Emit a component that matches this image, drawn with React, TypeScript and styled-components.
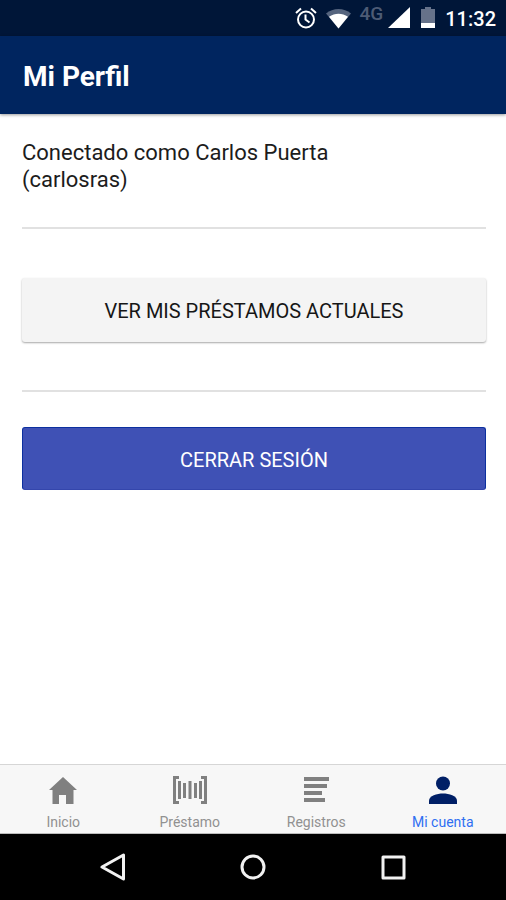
import React from "react";
import styled, { createGlobalStyle } from "styled-components";

const GlobalStyle = createGlobalStyle`
  *, *::before, *::after { box-sizing: border-box; }
  body {
    margin: 0;
    background: #fff;
    font-family: Roboto, "Liberation Sans", sans-serif;
  }
  button { font-family: inherit; cursor: pointer; }
`;

const Screen = styled.div`
  display: flex;
  flex-direction: column;
  min-height: 100vh;
`;

const StatusBar = styled.div`
  display: flex;
  align-items: center;
  justify-content: flex-end;
  height: 36px;
  padding: 0 10px;
  background: #001638;
  color: #fff;
`;

const StatusIcon = styled.svg<{ $gap: number }>`
  display: block;
  flex: none;
  margin-right: ${({ $gap }) => $gap}px;
`;

const Network = styled.span`
  align-self: flex-start;
  margin: 3px 5px 0 0;
  font-size: 19px;
  font-weight: 500;
  line-height: 22px;
  color: #4d5b75;
`;

const Clock = styled.time`
  font-size: 20px;
  font-weight: 500;
  line-height: 36px;
  padding-top: 2px;
`;

const Header = styled.header`
  display: flex;
  align-items: center;
  height: 78px;
  padding: 4px 23px 0;
  background: #00255f;
  box-shadow: 0 1px 3px rgba(0, 0, 0, 0.4);
`;

const Title = styled.h1`
  margin: 0;
  font-size: 28px;
  font-weight: 700;
  line-height: 32px;
  color: #fff;
`;

const Content = styled.main`
  flex: 1;
  padding: 25px 20px 24px 22px;
`;

const Message = styled.p`
  margin: 0;
  font-size: 22px;
  line-height: 27px;
  color: #1c1c1c;
`;

const Divider = styled.hr<{ $top: number; $bottom: number }>`
  height: 2px;
  margin: ${({ $top, $bottom }) => `${$top}px 0 ${$bottom}px`};
  border: 0;
  background: #e1e1e1;
`;

const ActionButton = styled.button<{ $primary?: boolean }>`
  display: block;
  width: 100%;
  height: ${({ $primary }) => ($primary ? 63 : 64)}px;
  padding: 2px 0 0;
  border: ${({ $primary }) => ($primary ? "1px solid #0c309f" : "0")};
  border-bottom-color: #3446ac;
  border-radius: 3px;
  background: ${({ $primary }) => ($primary ? "#3f51b5" : "#f4f4f4")};
  box-shadow: ${({ $primary }) =>
    $primary ? "none" : "0 1px 2px rgba(0, 0, 0, 0.35)"};
  color: ${({ $primary }) => ($primary ? "#fff" : "#161616")};
  font-size: 20px;
  line-height: 24px;
  text-transform: uppercase;
`;

const TabBar = styled.nav`
  display: grid;
  grid-template-columns: repeat(4, 1fr);
  height: 70px;
  border-top: 1px solid #d6d6d6;
  border-bottom: 1px solid #bcbcbc;
  background: #f7f7f7;
`;

const Tab = styled.a<{ $active?: boolean }>`
  display: flex;
  flex-direction: column;
  align-items: center;
  gap: 10px;
  padding-top: 11px;
  color: ${({ $active }) => ($active ? "#2f6ff2" : "#919191")};
  font-size: 14px;
  line-height: 16px;
  text-decoration: none;
`;

const TabIcon = styled.svg<{ $active?: boolean }>`
  display: block;
  fill: ${({ $active }) => ($active ? "#001f66" : "#808080")};
`;

const SystemBar = styled.div`
  display: flex;
  align-items: center;
  justify-content: center;
  gap: 112px;
  height: 66px;
  background: #000;
`;

const SystemButton = styled.button`
  display: block;
  padding: 0;
  border: 0;
  background: none;
  svg {
    display: block;
    fill: none;
    stroke: #f2f2f2;
    stroke-width: 3;
    stroke-linejoin: round;
  }
`;

const tabs = [
  {
    label: "Inicio",
    width: 28,
    icon: <path d="M14 1 0 14h3.500v14H10v-9h7v9h7.500V14H28z" />,
  },
  {
    label: "Préstamo",
    width: 36,
    icon: (
      <path d="M1 0h6v3H4v22h3v3H1zM29 0h6v28h-6v-3h3V3h-3zM6 5h3v18H6zM11 7h3v15h-3zM16.500 5h3v18h-3zM22 7h3v15h-3zM27 5h3v18h-3z" />
    ),
  },
  {
    label: "Registros",
    width: 28,
    icon: <path d="M2 1h25v4H2zM2 8h23v4H2zM2 15h18v4H2zM2 22h21v4H2z" />,
  },
  {
    label: "Mi cuenta",
    width: 28,
    active: true,
    icon: (
      <>
        <circle cx="14" cy="7.500" r="7" />
        <path d="M0 28v-3.500C0 20 8 17.500 14 17.500S28 20 28 24.500V28z" />
      </>
    ),
  },
];

export default function App() {
  return (
    <>
      <GlobalStyle />
      <Screen>
        <StatusBar>
          <StatusIcon $gap={9} width="22" height="22" viewBox="0 0 22 22" fill="none" stroke="#fff" strokeWidth="2">
            <circle cx="11" cy="12.500" r="8" />
            <path d="M1 6 6 1.500M21 6l-5-4.500M10.500 7.500v5l4 3" />
          </StatusIcon>
          <StatusIcon $gap={9} width="25" height="22" viewBox="0 0 25 22">
            <path d="M0 6.500C7 .5 18 .5 25 6.500L12.500 21.500z" fill="#55647e" />
            <path d="M3 9.800c6-4 13-4 19 0L12.500 21.500z" fill="#fff" />
          </StatusIcon>
          <Network>4G</Network>
          <StatusIcon $gap={11} width="22" height="22" viewBox="0 0 22 22">
            <path d="M22 0v21H0z" fill="#fff" />
          </StatusIcon>
          <StatusIcon $gap={10} width="14" height="22" viewBox="0 0 14 22">
            <path d="M4 0h6v2h4v19H0V2h4z" fill="#66728a" />
            <path d="M0 16h14v5H0z" fill="#fff" />
          </StatusIcon>
          <Clock>11:32</Clock>
        </StatusBar>
        <Header>
          <Title>Mi Perfil</Title>
        </Header>
        <Content>
          <Message>
            Conectado como Carlos Puerta
            <br />
            (carlosras)
          </Message>
          <Divider $top={34} $bottom={49} />
          <ActionButton type="button">Ver mis préstamos actuales</ActionButton>
          <Divider $top={48} $bottom={35} />
          <ActionButton type="button" $primary>
            Cerrar sesión
          </ActionButton>
        </Content>
        <TabBar>
          {tabs.map(({ label, width, active, icon }) => (
            <Tab key={label} href="#" $active={active} aria-current={active ? "page" : undefined}>
              <TabIcon $active={active} width={width} height="28" viewBox={`0 0 ${width} 28`} aria-hidden="true">
                {icon}
              </TabIcon>
              {label}
            </Tab>
          ))}
        </TabBar>
        <SystemBar>
          <SystemButton type="button" aria-label="Atrás">
            <svg width="28" height="28" viewBox="0 0 28 28">
              <path d="M24.500 2v24L3 14z" />
            </svg>
          </SystemButton>
          <SystemButton type="button" aria-label="Inicio del sistema">
            <svg width="28" height="28" viewBox="0 0 28 28">
              <circle cx="14" cy="14" r="11" />
            </svg>
          </SystemButton>
          <SystemButton type="button" aria-label="Aplicaciones recientes">
            <svg width="28" height="28" viewBox="0 0 28 28">
              <rect x="4" y="4" width="21" height="21" />
            </svg>
          </SystemButton>
        </SystemBar>
      </Screen>
    </>
  );
}
